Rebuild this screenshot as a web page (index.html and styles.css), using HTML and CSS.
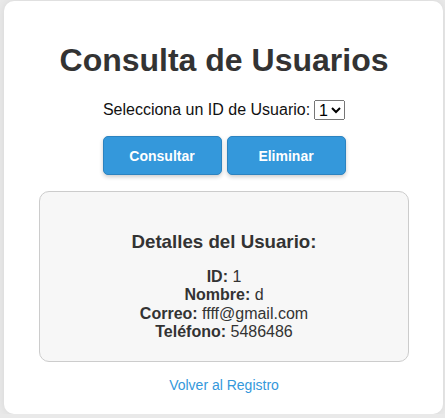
FILE: index.html
```html
<!DOCTYPE html>
<html lang="es">
<head>
<meta charset="utf-8">
<title>Consulta de Usuarios</title>
<link rel="stylesheet" href="styles.css">
</head>
<body>
<div class="card">
  <h1 class="title">Consulta de Usuarios</h1>
  <div class="select-row">
    <label for="uid">Selecciona un ID de Usuario:</label>
    <select id="uid" class="id-select"><option>1</option></select>
  </div>
  <div class="actions">
    <button class="btn">Consultar</button>
    <button class="btn">Eliminar</button>
  </div>
  <div class="details">
    <h3 class="details-title">Detalles del Usuario:</h3>
    <div class="details-lines">
      <div><strong>ID:</strong> 1</div>
      <div><strong>Nombre:</strong> d</div>
      <div><strong>Correo:</strong> ffff@gmail.com</div>
      <div><strong>Teléfono:</strong> 5486486</div>
    </div>
  </div>
  <a class="back" href="#">Volver al Registro</a>
</div>
</body>
</html>
```
FILE: styles.css
```css
html, body {
  margin: 0;
  padding: 0;
  background: #e9e9e9;
  font-family: "Liberation Sans", Arial, sans-serif;
  color: #333;
}
.card {
  margin: 1px 2px 0 4px;
  background: #fff;
  border-radius: 10px;
  box-shadow: 0 0 8px rgba(0,0,0,0.08);
  padding: 20px 30px 21px 31px;
  text-align: center;
  display: flex;
  flex-direction: column;
  align-items: center;
}
.title {
  font-size: 32px;
  font-weight: bold;
  margin: 21px 0 21px;
  color: #333;
}
.select-row {
  font-size: 16px;
  color: #111;
  display: flex;
  align-items: center;
  gap: 4px;
  height: 20px;
}
.id-select {
  font-family: "Liberation Sans", Arial, sans-serif;
  font-size: 16px;
  height: 20px;
  padding: 0;
}
.actions {
  display: flex;
  gap: 5px;
  margin-top: 16px;
}
.btn {
  width: 119px;
  height: 39px;
  background: #3498db;
  color: #fff;
  border: 1px solid #2c83c0;
  border-radius: 5px;
  font-family: "Liberation Sans", Arial, sans-serif;
  font-size: 14px;
  font-weight: bold;
  box-shadow: 0 2px 4px rgba(0,0,0,0.2);
  cursor: pointer;
}
.details {
  margin-top: 16px;
  width: 370px;
  box-sizing: border-box;
  background: #f7f7f7;
  border: 1px solid #ccc;
  border-radius: 10px;
  padding: 20px 20px 19px;
}
.details-title {
  font-size: 18.72px;
  margin: 19px 0 15px;
  color: #333;
}
.details-lines {
  font-size: 16px;
  line-height: 18.4px;
  color: #333;
}
.back {
  margin-top: 15px;
  font-size: 14px;
  color: #3498db;
  text-decoration: none;
}
```
